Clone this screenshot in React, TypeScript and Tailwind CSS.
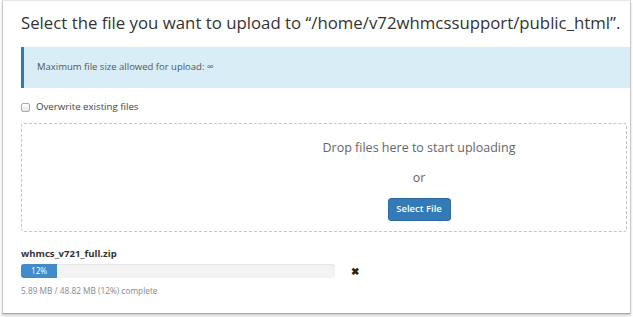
export default function App() {
  return (
    <div className="w-[633px] h-[317px] bg-white font-['Open_Sans',sans-serif] text-[#333]">
      <div className="ml-[2px] w-[629px] h-[314px] border border-t-[#e6e6e6] border-x-[#c9c9c9] border-b-[#a9a9a9] shadow-[0_2px_2px_rgba(0,0,0,0.18)] pl-[18px] pt-[9px]">
        {/* Title */}
        <h1 className="text-[16.8px] leading-[26px] text-[#333] whitespace-nowrap">
          Select the file you want to upload to “/home/v72whmcssupport/public_html”.
        </h1>

        {/* Info alert */}
        <div className="mt-[11px] h-[41px] flex items-center bg-[#d9edf7] border-l-[3px] border-[#2f7ab5] pl-[13px] text-[9.5px] text-[#555]">
          Maximum file size allowed for upload: ∞
        </div>

        {/* Overwrite checkbox */}
        <label className="mt-[12px] h-[14px] flex items-center gap-[6px] text-[9.7px] text-[#444]">
          <span className="w-[9px] h-[9px] rounded-[2px] border border-[#aaa] bg-gradient-to-b from-[#fff] to-[#e6e6e6]" />
          Overwrite existing files
        </label>

        {/* Drop zone */}
        <div className="mt-[9px] mr-[3px] h-[109px] border border-dashed border-[#c4c4c4] rounded-[3px] flex flex-col items-center pl-[190px] pt-[15px]">
          <div className="text-[12.5px] leading-[18px] text-[#666]">Drop files here to start uploading</div>
          <div className="mt-[12px] text-[12.5px] leading-[18px] text-[#666]">or</div>
          <button className="mt-[11px] w-[63px] h-[23px] rounded-[3px] bg-[#337ab7] border border-[#2e6da4] text-white text-[9.5px] font-semibold">
            Select File
          </button>
        </div>

        {/* Upload item */}
        <div className="mt-[15px] text-[9.6px] font-bold leading-[14px] text-[#333]">whmcs_v721_full.zip</div>
        <div className="mt-[3px] flex items-center">
          <div className="w-[314px] h-[14px] rounded-[3px] bg-[#f3f3f3] shadow-[inset_0_1px_1px_rgba(0,0,0,0.06)] overflow-hidden">
            <div className="h-full bg-[#428bca] text-white text-[8.2px] leading-[14px] text-center" style={{ width: "11.5%" }}>
              12%
            </div>
          </div>
          <span className="ml-[16px] text-[10px] leading-none text-[#222] font-bold">✖</span>
        </div>
        <div className="mt-[7px] text-[8.3px] leading-[12px] text-[#888]">5.89 MB / 48.82 MB (12%) complete</div>
      </div>
    </div>
  );
}
